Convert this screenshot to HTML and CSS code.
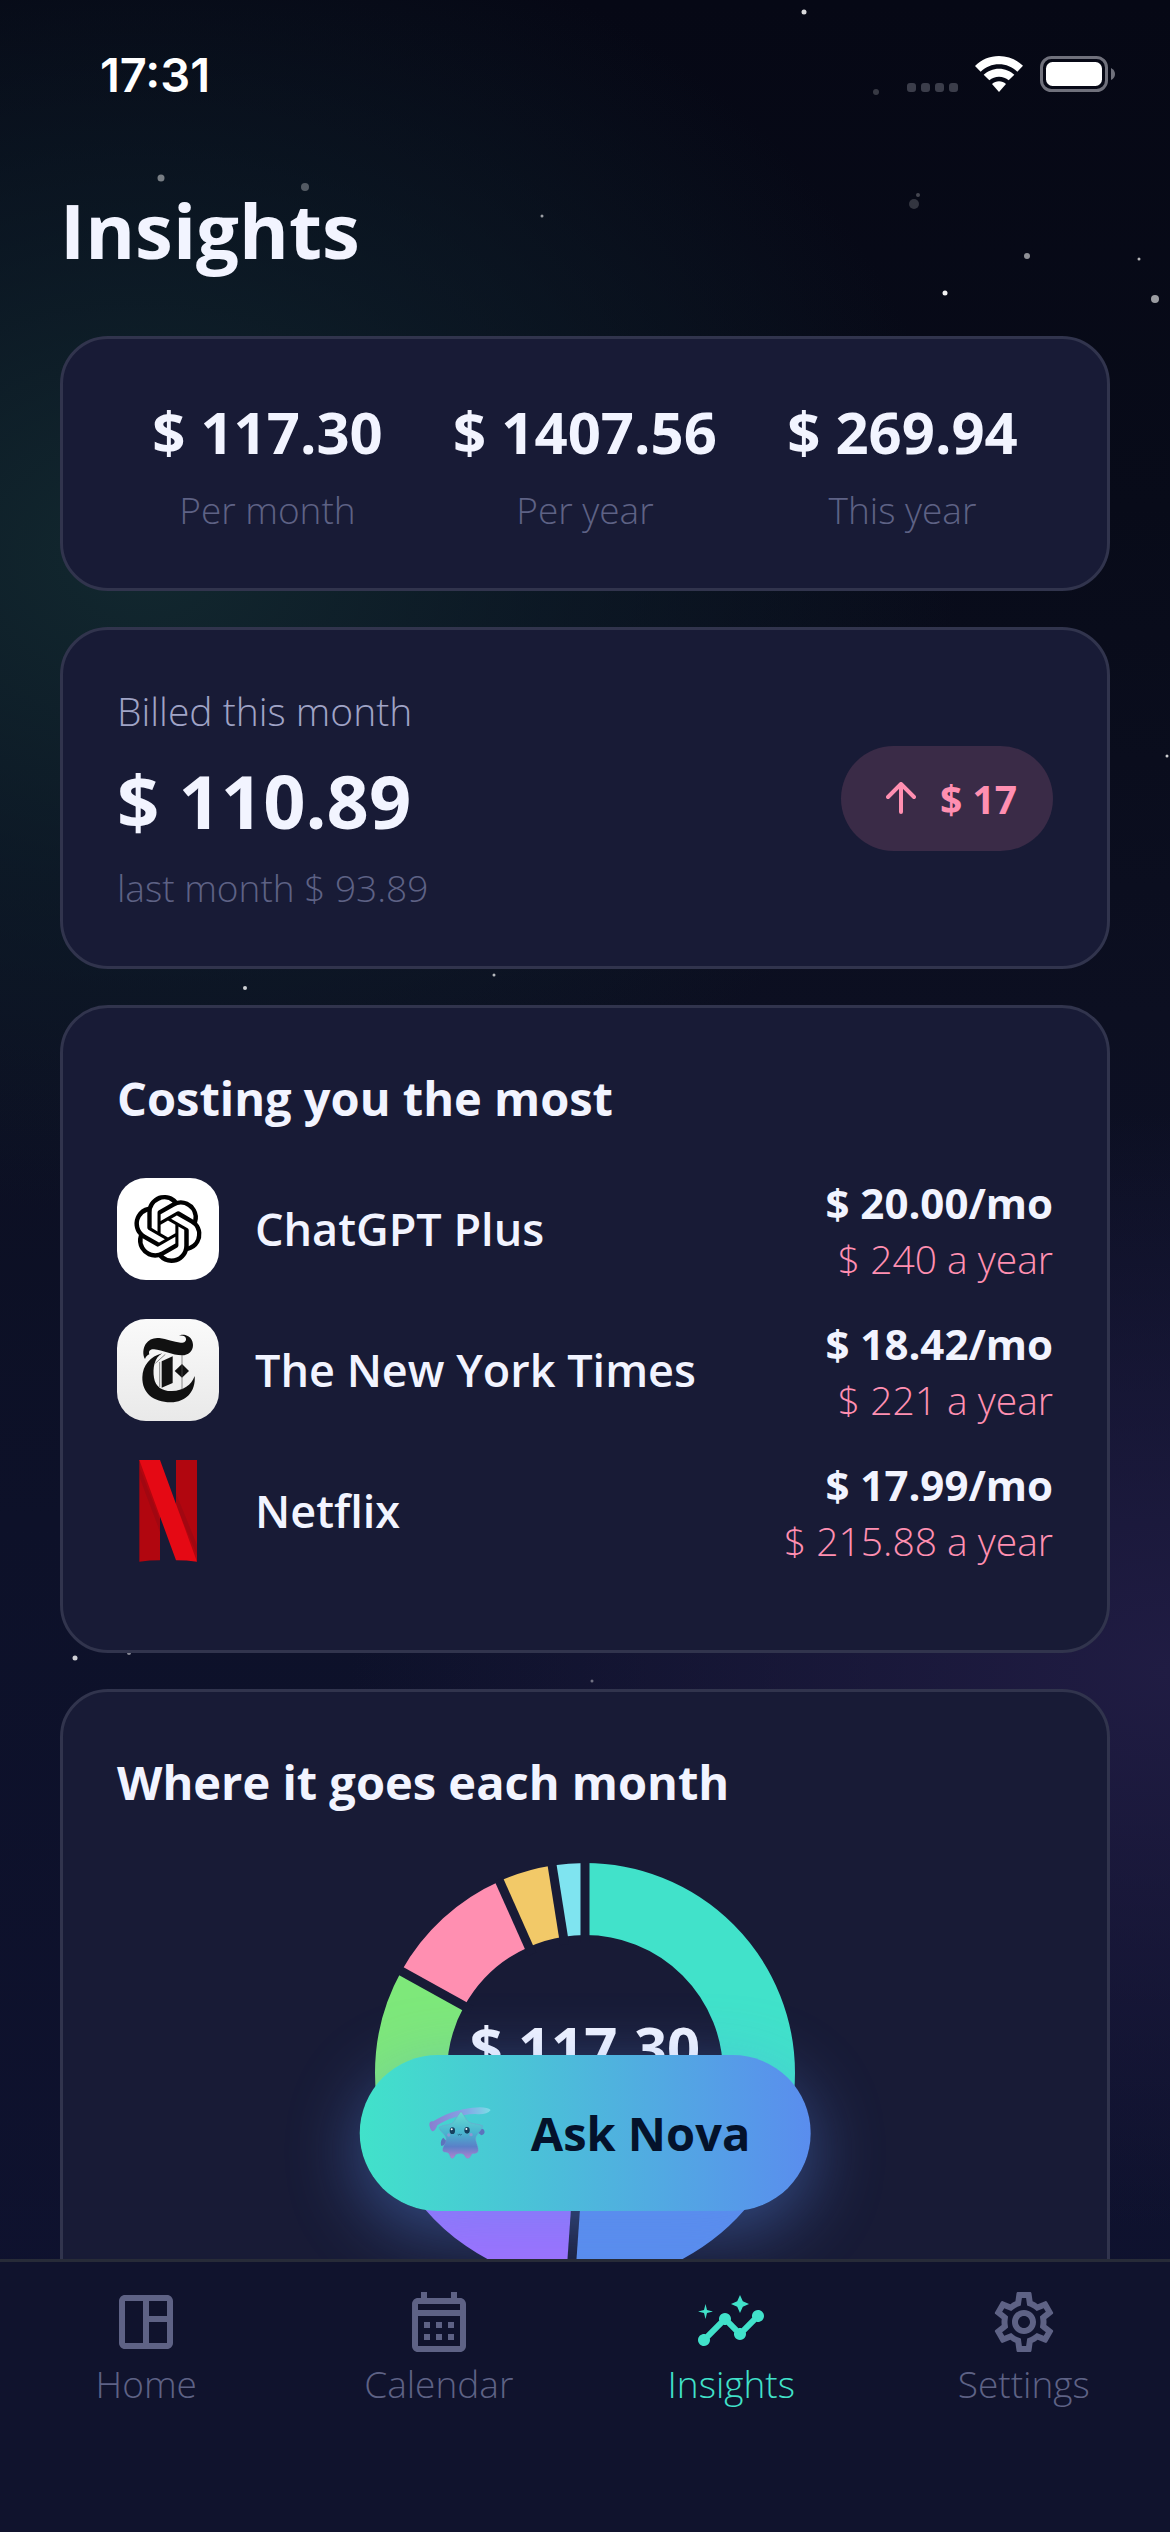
FILE: index.html
```
<!DOCTYPE html>
<html lang="en">
<head>
  <meta charset="UTF-8" />
  <meta name="viewport" content="width=device-width, initial-scale=1.0" />
  <title>Insights</title>
  <link rel="stylesheet" href="styles.css">
</head>
<body>
  <!-- Starfield -->
  <svg class="stars" viewBox="0 0 1170 2532" preserveAspectRatio="xMidYMin slice" fill="#fff" aria-hidden="true">
    <circle cx="804" cy="12" r="2.5" opacity=".85" />
    <circle cx="876" cy="92" r="3" opacity=".2" />
    <circle cx="161" cy="178" r="3.5" opacity=".45" />
    <circle cx="305" cy="187" r="4" opacity=".3" />
    <circle cx="542" cy="216" r="1.5" opacity=".6" />
    <circle cx="918" cy="195" r="2" opacity=".25" />
    <circle cx="914" cy="204" r="5" opacity=".18" />
    <circle cx="1027" cy="256" r="3" opacity=".55" />
    <circle cx="1139" cy="259" r="1.5" opacity=".7" />
    <circle cx="945" cy="293" r="2.5" opacity=".95" />
    <circle cx="1155" cy="299" r="4" opacity=".6" />
    <circle cx="1167" cy="756" r="1.5" opacity=".8" />
    <circle cx="494" cy="975" r="1.5" opacity=".7" />
    <circle cx="245" cy="988" r="2" opacity=".8" />
    <circle cx="75" cy="1658" r="2.5" opacity=".8" />
    <circle cx="129" cy="1653" r="2" opacity=".5" />
    <circle cx="592" cy="1681" r="1.5" opacity=".4" />
  </svg>

  <div class="app">
    <div class="status-bar">
      <span class="status-time">17:31</span>
      <div class="status-icons">
        <svg width="51" height="9" viewBox="0 0 51 9" fill="#3b3d4a">
          <rect width="9" height="9" rx="3" />
          <rect x="14" width="9" height="9" rx="3" />
          <rect x="28" width="9" height="9" rx="3" />
          <rect x="42" width="9" height="9" rx="3" />
        </svg>
        <svg width="48" height="36" viewBox="0 0 144 108" fill="#fff">
          <path d="M72 0c28 0 53 11 72 29l-17 18C112 33 93 25 72 25S32 33 17 47L0 30C19 11 44 0 72 0z" />
          <path d="M72 38c18 0 34 7 46 18l-17 17c-8-7-18-11-29-11s-21 4-29 11L26 56c12-11 28-18 46-18z" />
          <path d="M72 76c8 0 15 3 21 8l-21 24-21-24c6-5 13-8 21-8z" />
        </svg>
        <svg width="75" height="36" viewBox="0 0 75 36">
          <rect x="1.5" y="1.5" width="65" height="33" rx="10" fill="none" stroke="#70717c" stroke-width="3" />
          <rect x="6" y="6" width="56" height="24" rx="6.5" fill="#fff" />
          <path d="M71 12q4 2 4 6t-4 6z" fill="#70717c" />
        </svg>
      </div>
    </div>

    <main>
      <h1>Insights</h1>

      <section class="card totals">
        <div class="total">
          <div class="total-value">$ 117.30</div>
          <div class="total-label">Per month</div>
        </div>
        <div class="total">
          <div class="total-value">$ 1407.56</div>
          <div class="total-label">Per year</div>
        </div>
        <div class="total">
          <div class="total-value">$ 269.94</div>
          <div class="total-label">This year</div>
        </div>
      </section>

      <section class="card billed">
        <div>
          <div class="billed-title">Billed this month</div>
          <div class="billed-value">$ 110.89</div>
          <div class="billed-last">last month $ 93.89</div>
        </div>
        <div class="badge">
          <svg width="30" height="32" viewBox="0 0 30 32" fill="none" stroke="#ff8fb1" stroke-width="4" stroke-linecap="round" stroke-linejoin="round">
            <path d="M15 30V3M2 15L15 2l13 13" />
          </svg>
          <span>$ 17</span>
        </div>
      </section>

      <section class="card top-costs">
        <h2>Costing you the most</h2>
        <ul>
          <li>
            <svg class="logo" viewBox="0 0 102 102">
              <rect width="102" height="102" rx="29" fill="#fff" />
              <path transform="translate(17 17) scale(2.83)" d="M22.2819 9.8211a5.9847 5.9847 0 0 0-.5157-4.9108 6.0462 6.0462 0 0 0-6.5098-2.9A6.0651 6.0651 0 0 0 4.9807 4.1818a5.9847 5.9847 0 0 0-3.9977 2.9 6.0462 6.0462 0 0 0 .7427 7.0966 5.98 5.98 0 0 0 .511 4.9107 6.051 6.051 0 0 0 6.5146 2.9001A5.9847 5.9847 0 0 0 13.2599 24a6.0557 6.0557 0 0 0 5.7718-4.2058 5.9894 5.9894 0 0 0 3.9977-2.9001 6.0557 6.0557 0 0 0-.7475-7.0729zm-9.022 12.6081a4.4755 4.4755 0 0 1-2.8764-1.0408l.1419-.0804 4.7783-2.7582a.7948.7948 0 0 0 .3927-.6813v-6.7369l2.02 1.1686a.071.071 0 0 1 .038.052v5.5826a4.504 4.504 0 0 1-4.4945 4.4944zm-9.6607-4.1254a4.4708 4.4708 0 0 1-.5346-3.0137l.142.0852 4.783 2.7582a.7712.7712 0 0 0 .7806 0l5.8428-3.3685v2.3324a.0804.0804 0 0 1-.0332.0615L9.74 19.9502a4.4992 4.4992 0 0 1-6.1408-1.6464zM2.3408 7.8956a4.485 4.485 0 0 1 2.3655-1.9728V11.6a.7664.7664 0 0 0 .3879.6765l5.8144 3.3543-2.0201 1.1685a.0757.0757 0 0 1-.071 0l-4.8303-2.7865A4.504 4.504 0 0 1 2.3408 7.872zm16.5963 3.8558L13.1038 8.364 15.1192 7.2a.0757.0757 0 0 1 .071 0l4.8303 2.7913a4.4944 4.4944 0 0 1-.6765 8.1042v-5.6772a.79.79 0 0 0-.407-.667zm2.0107-3.0231l-.142-.0852-4.7735-2.7818a.7759.7759 0 0 0-.7854 0L9.409 9.2297V6.8974a.0662.0662 0 0 1 .0284-.0615l4.8303-2.7866a4.4992 4.4992 0 0 1 6.6802 4.66zM8.3065 12.863l-2.02-1.1638a.0804.0804 0 0 1-.038-.0567V6.0742a4.4992 4.4992 0 0 1 7.3757-3.4537l-.142.0805L8.704 5.459a.7948.7948 0 0 0-.3927.6813zm1.0976-2.3654l2.602-1.4998 2.6069 1.4998v2.9994l-2.5974 1.4997-2.6067-1.4997Z" />
            </svg>
            <span class="name">ChatGPT Plus</span>
            <div class="price">
              <div class="price-month">$ 20.00/mo</div>
              <div class="price-year">$ 240 a year</div>
            </div>
          </li>
          <li>
            <svg class="logo" viewBox="0 0 306 306">
              <defs>
                <linearGradient id="paper" x1="0" y1="0" x2="0" y2="1">
                  <stop offset="0" stop-color="#fafafa" />
                  <stop offset="1" stop-color="#e9e9e9" />
                </linearGradient>
              </defs>
              <rect width="306" height="306" rx="87" fill="url(#paper)" />
              <g fill="#111">
                <path d="M84 120C76 108 78 88 86 75c9-14 24-20 41-18 22 3 43 12 64 14 10 1 17-4 16-12-1-7-9-10-20-9 2-3 11-4 18-2 15 4 23 17 23 30 0 18-14 31-33 31-29 0-58-16-84-18-13-1-17 7-14 15-6 2-10 7-13 14z" />
                <path d="M136 103c-25 13-29 46-25 73 4 29 28 41 54 40 34-1 58-17 68-45 4 46-26 79-72 79-52 0-86-28-85-75 1-36 24-63 60-72z" />
                <path d="M134 127l33-15v80l-33 14z" />
                <path d="M195 135l21 21-21 20-22-20z" />
              </g>
              <path d="M195 108v104M115 133l30-27M128 129v75" stroke="#555" stroke-width="2" fill="none" />
            </svg>
            <span class="name">The New York Times</span>
            <div class="price">
              <div class="price-month">$ 18.42/mo</div>
              <div class="price-year">$ 221 a year</div>
            </div>
          </li>
          <li>
            <svg class="logo" viewBox="0 0 306 306">
              <path d="M67 0h62v301q-31 0-62 4zM177 0h63v305l-63-100z" fill="#b1060f" />
              <path d="M67 20v30l62 165v-35zM177 100v35l63 150v-30z" fill="#8a0a14" opacity=".4" />
              <path d="M67 0h62l111 305q-31-4-63-4z" fill="#e50914" />
            </svg>
            <span class="name">Netflix</span>
            <div class="price">
              <div class="price-month">$ 17.99/mo</div>
              <div class="price-year">$ 215.88 a year</div>
            </div>
          </li>
        </ul>
      </section>

      <section class="card breakdown">
        <h2>Where it goes each month</h2>
        <svg class="donut" viewBox="-210 -210 420 420">
          <g transform="rotate(-90)" fill="none" stroke-width="72">
            <circle r="174" pathLength="360" stroke="#41e2ca" stroke-dasharray="112 360" />
            <circle r="174" pathLength="360" stroke="#5a8dee" stroke-dasharray="72 360" stroke-dashoffset="-112" />
            <circle r="174" pathLength="360" stroke="#a070ff" stroke-dasharray="61 360" stroke-dashoffset="-184" />
            <circle r="174" pathLength="360" stroke="#7ee87a" stroke-dasharray="54 360" stroke-dashoffset="-245" />
            <circle r="174" pathLength="360" stroke="#ff8fb1" stroke-dasharray="37 360" stroke-dashoffset="-299" />
            <circle r="174" pathLength="360" stroke="#f2c968" stroke-dasharray="15 360" stroke-dashoffset="-336" />
            <circle r="174" pathLength="360" stroke="#7fe4f0" stroke-dasharray="9 360" stroke-dashoffset="-351" />
          </g>
          <!-- gaps between the sections -->
          <g stroke="#181b36" stroke-width="9">
            <path d="M0-130V-212" />
            <path d="M0-130V-212" transform="rotate(112)" />
            <path d="M0-130V-212" transform="rotate(184)" />
            <path d="M0-130V-212" transform="rotate(245)" />
            <path d="M0-130V-212" transform="rotate(299)" />
            <path d="M0-130V-212" transform="rotate(336)" />
            <path d="M0-130V-212" transform="rotate(351)" />
          </g>
          <text class="donut-value" x="0" y="-4" text-anchor="middle">$ 117.30</text>
        </svg>
      </section>

      <button class="ask">
        <svg width="63" height="54" viewBox="0 0 189 162">
          <defs>
            <linearGradient id="star" x1="0" y1="0" x2="0" y2="1">
              <stop offset="0" stop-color="#68dcd2" />
              <stop offset=".45" stop-color="#49b5cf" />
              <stop offset=".75" stop-color="#5a80c8" />
              <stop offset="1" stop-color="#b183cf" />
            </linearGradient>
            <linearGradient id="wand" x1="0" y1="0" x2="1" y2="0">
              <stop offset="0" stop-color="#8a7ed0" />
              <stop offset=".6" stop-color="#83a6e6" />
              <stop offset="1" stop-color="#7bdde6" />
            </linearGradient>
          </defs>
          <path d="M2 58c-1-10 4-14 12-12C42 26 90 9 132 5c24-3 46-2 54 7-8 11-24 14-46 12-44 0-86 16-114 34-4 12-10 20-16 17-5-3-6-10-8-17z" fill="url(#wand)" />
          <path d="M44 95c-8 6-9 17-6 25 7-2 13-7 17-13zM158 88c11-3 12-12 6-18-6-5-12 2-18 9z" fill="#5c74bd" />
          <path d="M97 17c9 8 13 23 23 31 11 7 29 5 41 11 3 9-17 25-20 35-3 14 12 32 6 44-5 6-14 3-18 6-4 8-6 13-12 13-7 0-8-11-14-13-8-2-16-2-21 1-4 4-6 12-11 12-7 0-7-13-13-17-6-2-15 0-16-7-1-11 13-25 10-37-3-13-22-22-20-33 10-7 30-5 40-12 10-9 15-26 25-34z" fill="url(#star)" stroke="#8d86cf" stroke-opacity=".5" stroke-width="2" />
          <ellipse cx="71" cy="74" rx="8" ry="10" fill="#16405f" />
          <ellipse cx="115" cy="73" rx="8" ry="10" fill="#16405f" />
          <circle cx="69" cy="70" r="3" fill="#fff" />
          <circle cx="113" cy="69" r="3" fill="#fff" />
          <path d="M87 85q3 4 6 0q3 4 6 0" fill="none" stroke="#16405f" stroke-width="2" />
          <circle cx="60" cy="87" r="5" fill="#b48ad6" opacity=".6" />
          <circle cx="127" cy="86" r="5" fill="#b48ad6" opacity=".6" />
        </svg>
        Ask Nova
      </button>
    </main>

    <nav>
      <a href="#home">
        <svg viewBox="0 0 24 24"><path d="M19 3H5c-1.1 0-2 .9-2 2v14c0 1.1.9 2 2 2h14c1.1 0 2-.9 2-2V5c0-1.1-.9-2-2-2zM5 19V5h6v14H5zm14 0h-6v-7h6v7zm0-9h-6V5h6v5z" /></svg>
        Home
      </a>
      <a href="#calendar">
        <svg viewBox="0 0 24 24"><path d="M19 4h-1V2h-2v2H8V2H6v2H5c-1.11 0-1.99.9-1.99 2L3 20c0 1.1.89 2 2 2h14c1.1 0 2-.9 2-2V6c0-1.1-.9-2-2-2zm0 16H5V10h14v10zm0-12H5V6h14v2zM9 14H7v-2h2v2zm4 0h-2v-2h2v2zm4 0h-2v-2h2v2zm-8 4H7v-2h2v2zm4 0h-2v-2h2v2zm4 0h-2v-2h2v2z" /></svg>
        Calendar
      </a>
      <a href="#insights" class="active">
        <svg viewBox="0 0 24 24"><path d="M21 8c-1.45 0-2.26 1.44-1.93 2.51l-3.55 3.56c-.3-.09-.74-.09-1.04 0l-2.55-2.55C12.27 10.45 11.46 9 10 9c-1.45 0-2.27 1.44-1.93 2.52l-4.56 4.55C2.44 15.74 1 16.55 1 18c0 1.1.9 2 2 2 1.45 0 2.26-1.44 1.93-2.51l4.55-4.56c.3.09.74.09 1.04 0l2.55 2.55C12.73 16.55 13.54 18 15 18c1.45 0 2.27-1.44 1.93-2.52l3.56-3.55C21.56 12.26 23 11.45 23 10c0-1.1-.9-2-2-2z" /><path d="M15 9l.94-2.07L18 6l-2.06-.93L15 3l-.92 2.07L12 6l2.08.93zM3.5 11L4 9l2-.5L4 8l-.5-2L3 8l-2 .5L3 9z" /></svg>
        Insights
      </a>
      <a href="#settings">
        <svg viewBox="0 0 24 24"><path d="M19.43 12.98c.04-.32.07-.64.07-.98 0-.34-.03-.66-.07-.98l2.11-1.65c.19-.15.24-.42.12-.64l-2-3.46c-.09-.16-.26-.25-.44-.25-.06 0-.12.01-.17.03l-2.49 1c-.52-.4-1.08-.73-1.69-.98l-.38-2.65C14.46 2.18 14.25 2 14 2h-4c-.25 0-.46.18-.49.42l-.38 2.65c-.61.25-1.17.59-1.69.98l-2.49-1c-.06-.02-.12-.03-.18-.03-.17 0-.34.09-.43.25l-2 3.46c-.13.22-.07.49.12.64l2.11 1.65c-.04.32-.07.65-.07.98 0 .33.03.66.07.98l-2.11 1.65c-.19.15-.24.42-.12.64l2 3.46c.09.16.26.25.44.25.06 0 .12-.01.17-.03l2.49-1c.52.4 1.08.73 1.69.98l.38 2.65c.03.24.24.42.49.42h4c.25 0 .46-.18.49-.42l.38-2.65c.61-.25 1.17-.59 1.69-.98l2.49 1c.06.02.12.03.18.03.17 0 .34-.09.43-.25l2-3.46c.12-.22.07-.49-.12-.64l-2.11-1.65zm-1.98-1.71c.04.31.05.52.05.73 0 .21-.02.43-.05.73l-.14 1.13.89.7 1.08.84-.7 1.21-1.27-.51-1.04-.42-.9.68c-.43.32-.84.56-1.25.73l-1.06.43-.16 1.13-.2 1.35h-1.4l-.19-1.35-.16-1.13-1.06-.43c-.43-.18-.83-.41-1.23-.71l-.91-.7-1.06.43-1.27.51-.7-1.21 1.08-.84.89-.7-.14-1.13c-.03-.31-.05-.54-.05-.74s.02-.43.05-.73l.14-1.13-.89-.7-1.08-.84.7-1.21 1.27.51 1.04.42.9-.68c.43-.32.84-.56 1.25-.73l1.06-.43.16-1.13.2-1.35h1.39l.19 1.35.16 1.13 1.06.43c.43.18.83.41 1.23.71l.91.7 1.06-.43 1.27-.51.7 1.21-1.07.85-.89.7.14 1.13zM12 8c-2.21 0-4 1.79-4 4s1.79 4 4 4 4-1.79 4-4-1.79-4-4-4zm0 6c-1.1 0-2-.9-2-2s.9-2 2-2 2 .9 2 2-.9 2-2 2z" /></svg>
        Settings
      </a>
    </nav>
  </div>
</body>
</html>
```
FILE: styles.css
```
* {
  box-sizing: border-box;
}
body {
  margin: 0;
  font-family: "Open Sans", "Noto Sans", sans-serif;
  color: #f2f4ff;
  background-color: #0c0f22;
  background-image:
    radial-gradient(ellipse 70% 26% at 12% 22%, #12282f 0%, #0e202b99 50%, #0b182600 100%),
    radial-gradient(ellipse 70% 22% at 100% 66%, #201c43 0%, #201c4300 100%),
    linear-gradient(#060815 0%, #080b19 20%, #0c0f21 40%, #0d1129 60%, #0f1230 100%);
}
h1, h2, ul {
  margin: 0;
  padding: 0;
  list-style: none;
}
.stars {
  position: absolute;
  top: 0;
  left: 0;
  width: 100%;
  height: 100%;
}
.app {
  position: relative;
  display: flex;
  flex-direction: column;
  height: 100vh;
}

/* Status bar */
.status-bar {
  display: flex;
  justify-content: space-between;
  align-items: center;
  height: 148px;
  padding: 0 55px 0 100px;
}
.status-time {
  font-family: Inter, sans-serif;
  font-size: 47px;
  font-weight: 600;
  color: #fff;
}
.status-icons {
  display: flex;
  align-items: flex-end;
  gap: 17px;
}

main {
  position: relative;
  flex: 1;
  min-height: 0;
  overflow: hidden;
  display: flex;
  flex-direction: column;
  gap: 36px;
  padding: 28px 60px 0;
}
h1 {
  font-size: 76px;
  line-height: 108px;
  font-weight: 700;
  margin-bottom: 16px;
}
h2 {
  font-size: 47px;
  line-height: 72px;
  font-weight: 700;
}
.card {
  flex-shrink: 0;
  background: #181b36;
  border: 3px solid #31344d;
  border-radius: 48px;
  padding: 54px;
}

/* Totals */
.totals {
  display: flex;
  justify-content: space-around;
  text-align: center;
}
.total-value {
  font-size: 58px;
  line-height: 78px;
  font-weight: 700;
}
.total-label {
  margin-top: 15px;
  font-size: 37px;
  line-height: 48px;
  font-weight: 300;
  color: #5e6285;
}

/* Billed this month */
.billed {
  display: flex;
  justify-content: space-between;
  align-items: center;
}
.billed-title {
  font-size: 39px;
  line-height: 54px;
  font-weight: 300;
  color: #a0a4c6;
}
.billed-value {
  margin: 15px 0;
  font-size: 74px;
  line-height: 96px;
  font-weight: 700;
}
.billed-last {
  font-size: 37px;
  line-height: 48px;
  font-weight: 300;
  color: #5e6285;
}
.badge {
  display: flex;
  align-items: center;
  gap: 24px;
  padding: 24px 36px 24px 45px;
  border-radius: 60px;
  background: #3a2b47;
  color: #ff8fb1;
  font-size: 39px;
  line-height: 57px;
  font-weight: 700;
}

/* Most expensive */
.top-costs {
  padding-bottom: 69px;
}
.top-costs ul {
  margin-top: 24px;
}
.top-costs li {
  display: flex;
  align-items: center;
  height: 141px;
}
.logo {
  width: 102px;
  height: 102px;
}
.name {
  flex: 1;
  margin-left: 36px;
  font-size: 45px;
  font-weight: 600;
}
.price {
  text-align: right;
}
.price-month {
  font-size: 42px;
  line-height: 60px;
  font-weight: 700;
}
.price-year {
  font-size: 39px;
  line-height: 51px;
  font-weight: 300;
  color: #ff8fb1;
}

/* Breakdown chart */
.donut {
  display: block;
  width: 420px;
  height: 420px;
  margin: 45px auto 0;
}
.donut-value {
  font-size: 58px;
  font-weight: 700;
  fill: #f2f4ff;
}

/* Floating button */
.ask {
  position: absolute;
  bottom: 48px;
  left: 50%;
  transform: translateX(-50%);
  display: flex;
  align-items: center;
  gap: 39px;
  height: 156px;
  padding: 0 60px 0 69px;
  border: none;
  border-radius: 78px;
  background: linear-gradient(90deg, #41e2ca, #5a8dee);
  box-shadow: 0 18px 72px #5a8dee73;
  color: #04122b;
  font-family: inherit;
  font-size: 47px;
  font-weight: 700;
  white-space: nowrap;
  cursor: pointer;
}

/* Tab bar */
nav {
  display: flex;
  height: 273px;
  padding-top: 24px;
  border-top: 3px solid #272b38;
  background: #10132d;
}
nav a {
  flex: 1;
  display: flex;
  flex-direction: column;
  align-items: center;
  color: #5e6285;
  font-size: 37px;
  line-height: 51px;
  font-weight: 300;
  text-decoration: none;
}
nav svg {
  width: 72px;
  height: 72px;
  fill: currentColor;
}
nav .active {
  color: #41e2ca;
}
```
